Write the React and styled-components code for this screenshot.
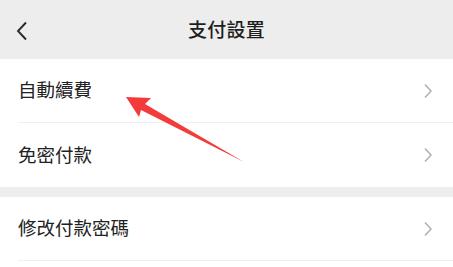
import React from "react";
import styled, { createGlobalStyle } from "styled-components";

const GlobalStyle = createGlobalStyle`
  body {
    margin: 0;
    background: #fff;
    font-family: "Noto Sans CJK TC", "Noto Sans", sans-serif;
  }
`;

const Page = styled.div`
  position: relative;
  width: 453px;
  height: 267px;
  overflow: hidden;
  background: #fff;
`;

const Header = styled.div`
  height: 59px;
  background: #ededed;
  display: flex;
  align-items: center;
  justify-content: center;
  position: relative;
  padding-bottom: 2px;
  box-sizing: border-box;
`;

const BackButton = styled.div`
  position: absolute;
  left: 14px;
  top: 20px;
  width: 16px;
  height: 22px;
  display: flex;
  align-items: center;
  justify-content: center;
`;

const Title = styled.div`
  font-size: 19px;
  font-weight: 500;
  color: #1e1e1e;
  letter-spacing: 0.3px;
`;

const Group = styled.div`
  background: #fff;
`;

const Gap = styled.div`
  height: 10px;
  background: #ededed;
`;

const Row = styled.div`
  height: 64px;
  display: flex;
  align-items: center;
  justify-content: space-between;
  margin-left: 18px;
  padding-right: 20px;
  box-sizing: border-box;
  border-bottom: ${(p) => (p.$last ? "none" : "1px solid #efefef")};
`;

const Label = styled.span`
  font-size: 18.5px;
  color: #222;
  padding-bottom: 3px;
`;

const Arrow = styled.svg`
  position: absolute;
  left: 0;
  top: 0;
  pointer-events: none;
`;

const Chevron = () => (
  <svg width="10" height="16" viewBox="0 0 10 16">
    <path d="M2 1.5 L8 8 L2 14.5" fill="none" stroke="#b3b3b3" strokeWidth="1.6" />
  </svg>
);

const items = [["自動續費", "免密付款"], ["修改付款密碼"]];

export default function App() {
  return (
    <>
      <GlobalStyle />
      <Page>
        <Header>
          <BackButton>
            <svg width="12" height="20" viewBox="0 0 12 20">
              <path d="M10 1.5 L2 10 L10 18.5" fill="none" stroke="#2a2a2a" strokeWidth="1.9" />
            </svg>
          </BackButton>
          <Title>支付設置</Title>
        </Header>
        <Group>
          {items[0].map((t, i) => (
            <Row key={t} $last={i === items[0].length - 1}>
              <Label>{t}</Label>
              <Chevron />
            </Row>
          ))}
        </Group>
        <Gap />
        <Group>
          {items[1].map((t) => (
            <Row key={t}>
              <Label>{t}</Label>
              <Chevron />
            </Row>
          ))}
        </Group>
        <Arrow width="453" height="267" viewBox="0 0 453 267">
          <polygon
            points="126,97 151,98 145,104 244,162 141,110 139,117"
            fill="#f43b3b"
          />
        </Arrow>
      </Page>
    </>
  );
}
